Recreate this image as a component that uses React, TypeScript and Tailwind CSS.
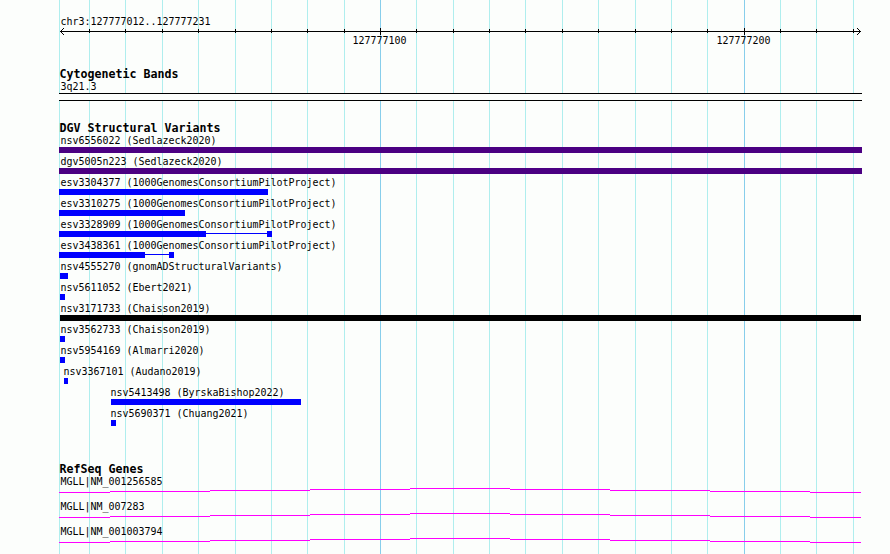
import React from 'react';

const LEFT = 59;
const GRID = [59, 89, 125, 162, 198, 235, 271, 307, 344, 380, 416, 453, 489, 525, 562, 598, 635, 671, 707, 744, 780, 816, 853];
const MAJOR = [380, 744];

type Block = { start: number; end: number };
type Variant = { name: string; label: number; color: string; blocks: Block[] };

const VARIANTS: Variant[] = [
  { name: 'nsv6556022 (Sedlazeck2020)', label: 60.5, color: '#4b0082', blocks: [{ start: 59, end: 862 }] },
  { name: 'dgv5005n223 (Sedlazeck2020)', label: 60.5, color: '#4b0082', blocks: [{ start: 59, end: 862 }] },
  { name: 'esv3304377 (1000GenomesConsortiumPilotProject)', label: 60.5, color: '#0000ff', blocks: [{ start: 59, end: 268 }] },
  { name: 'esv3310275 (1000GenomesConsortiumPilotProject)', label: 60.5, color: '#0000ff', blocks: [{ start: 59, end: 185 }] },
  { name: 'esv3328909 (1000GenomesConsortiumPilotProject)', label: 60.5, color: '#0000ff', blocks: [{ start: 59, end: 206 }, { start: 267, end: 272 }] },
  { name: 'esv3438361 (1000GenomesConsortiumPilotProject)', label: 60.5, color: '#0000ff', blocks: [{ start: 59, end: 145 }, { start: 169, end: 174 }] },
  { name: 'nsv4555270 (gnomADStructuralVariants)', label: 60.5, color: '#0000ff', blocks: [{ start: 60, end: 68 }] },
  { name: 'nsv5611052 (Ebert2021)', label: 60.5, color: '#0000ff', blocks: [{ start: 60, end: 65 }] },
  { name: 'nsv3171733 (Chaisson2019)', label: 60.5, color: '#000000', blocks: [{ start: 60, end: 861 }] },
  { name: 'nsv3562733 (Chaisson2019)', label: 60.5, color: '#0000ff', blocks: [{ start: 60, end: 65 }] },
  { name: 'nsv5954169 (Almarri2020)', label: 60.5, color: '#0000ff', blocks: [{ start: 60, end: 65 }] },
  { name: 'nsv3367101 (Audano2019)', label: 63.5, color: '#0000ff', blocks: [{ start: 64, end: 68 }] },
  { name: 'nsv5413498 (ByrskaBishop2022)', label: 110.5, color: '#0000ff', blocks: [{ start: 111, end: 301 }] },
  { name: 'nsv5690371 (Chuang2021)', label: 110.5, color: '#0000ff', blocks: [{ start: 111, end: 116 }] },
];

const GENES = ['MGLL|NM_001256585', 'MGLL|NM_007283', 'MGLL|NM_001003794'];

// intron line steps: width and distance from the top of the hat
const STEPS = [
  [51, 4], [100, 3], [100, 2], [100, 1], [100, 0], [100, 1], [100, 2], [100, 3], [51, 4],
];

function GridLines() {
  return (
    <svg className="absolute inset-0" width="890" height="554" shapeRendering="crispEdges">
      {GRID.map((x) => (
        <rect key={x} x={x} y={0} width={1} height={554} fill={MAJOR.includes(x) ? '#87ceeb' : '#afeeee'} />
      ))}
    </svg>
  );
}

function Ruler() {
  return (
    <svg className="block" width="803" height="8" shapeRendering="crispEdges">
      <rect x={1} y={3} width={801} height={1} />
      {GRID.slice(1).map((x) => {
        const major = MAJOR.includes(x);
        return <rect key={x} x={x - LEFT} y={major ? 0 : 1} width={1} height={major ? 7 : 4} />;
      })}
      {[0, 1, 2, 3].map((i) => (
        <g key={i}>
          <rect x={1 + i} y={3 - i} width={1} height={1} />
          <rect x={1 + i} y={3 + i} width={1} height={1} />
          <rect x={801 - i} y={3 - i} width={1} height={1} />
          <rect x={801 - i} y={3 + i} width={1} height={1} />
        </g>
      ))}
    </svg>
  );
}

function Heading({ children }: { children: React.ReactNode }) {
  return <h2 className="h-[13px] pl-[0.5px] text-[11.63px] leading-[13px] font-bold">{children}</h2>;
}

function VariantRow({ name, label, color, blocks }: Variant) {
  return (
    <div className="h-[21px]">
      <div className="h-[15px] pt-px leading-[15px]" style={{ paddingLeft: label - LEFT }}>{name}</div>
      <div className="flex h-[6px]" style={{ paddingLeft: blocks[0].start - LEFT }}>
        {blocks.map((b, i) => (
          <React.Fragment key={b.start}>
            {i > 0 && (
              <div className="mt-[2px] h-px" style={{ width: b.start - blocks[i - 1].end, background: color }} />
            )}
            <div className="h-[6px]" style={{ width: b.end - b.start, background: color }} />
          </React.Fragment>
        ))}
      </div>
    </div>
  );
}

function GeneRow({ name }: { name: string }) {
  return (
    <div className="h-[25px]">
      <div className="h-[13px] pl-[1.5px] leading-[14px]">{name}</div>
      <div className="flex">
        {STEPS.map(([width, top], i) => (
          <div key={i} className="h-px bg-[#ff00ff]" style={{ width, marginTop: top }} />
        ))}
      </div>
    </div>
  );
}

export default function App() {
  return (
    <div className="relative h-[554px] w-[890px] overflow-hidden bg-[#fcfefc] font-['DejaVu_Sans_Mono',monospace] text-[9.97px] whitespace-nowrap text-black">
      <GridLines />
      <main className="relative ml-[59px] w-[803px] pt-[14px]">
        <header className="h-[54px]">
          <div className="h-[14px] pl-[1.5px] leading-[16px]">chr3:127777012..127777231</div>
          <Ruler />
          <div className="flex h-[10px] leading-[10px]">
            <span className="ml-[293.5px] w-[364px]">127777100</span>
            <span>127777200</span>
          </div>
        </header>

        <section className="h-[54px]">
          <Heading>Cytogenetic Bands</Heading>
          <div className="h-[12px] pl-[1.5px] leading-[12px]">3q21.3</div>
          <div className="h-[8px] border-y border-black bg-[#fcfefc]" />
        </section>

        <section className="h-[341px]">
          <Heading>DGV Structural Variants</Heading>
          <div className="-mt-[3px]">
            {VARIANTS.map((v) => (
              <VariantRow key={v.name} {...v} />
            ))}
          </div>
        </section>

        <section>
          <Heading>RefSeq Genes</Heading>
          <div className="-mt-px">
            {GENES.map((g) => (
              <GeneRow key={g} name={g} />
            ))}
          </div>
        </section>
      </main>
    </div>
  );
}
